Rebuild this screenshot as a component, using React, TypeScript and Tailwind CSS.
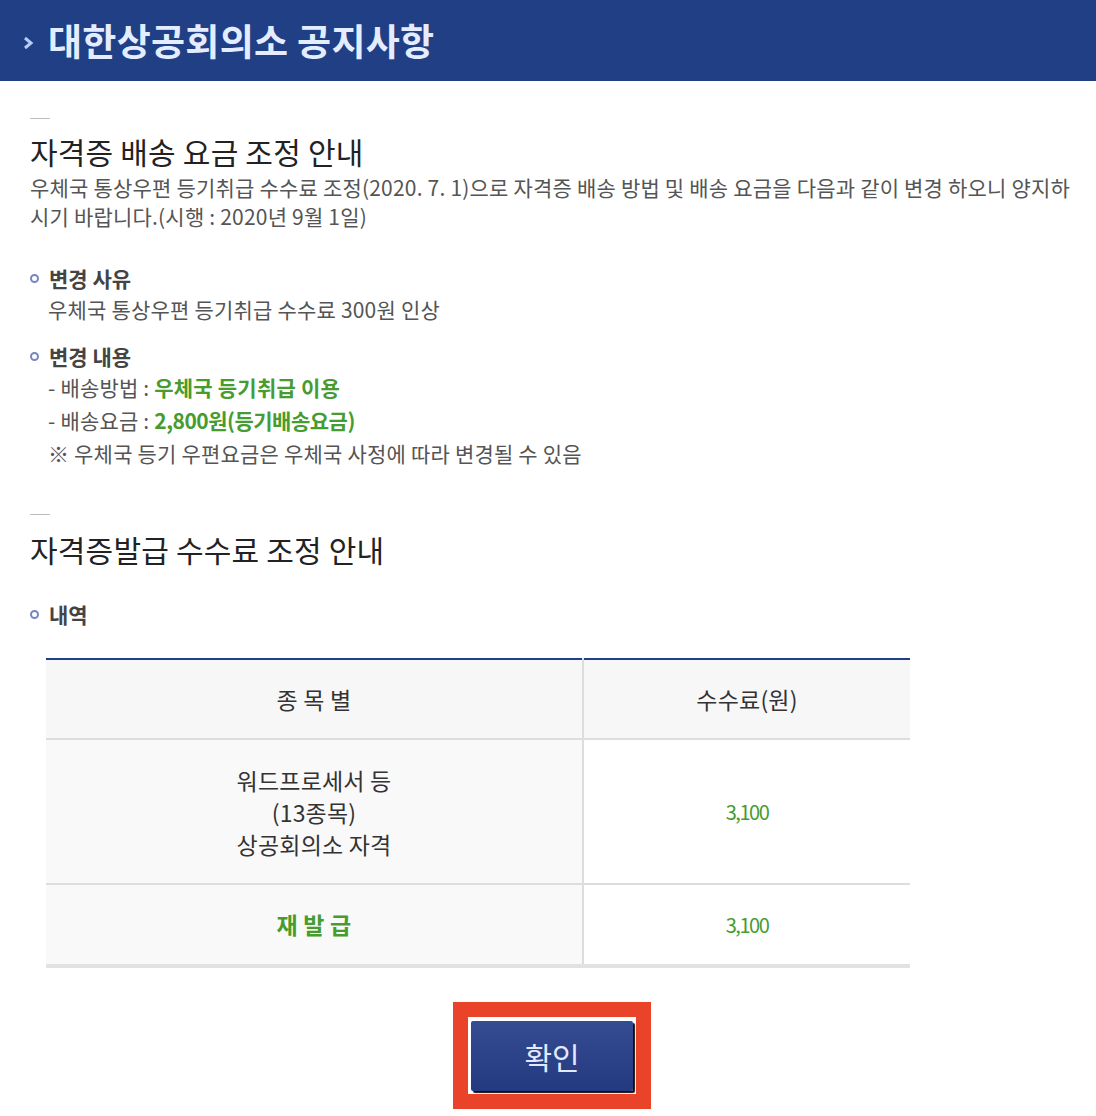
import React from 'react';

const font = { fontFamily: '"Noto Sans CJK KR", "Noto Sans", sans-serif' };

function Bullet({ children }: { children: React.ReactNode }) {
  return (
    <div className="flex items-center gap-[10px] text-[21px] font-bold text-[#444] leading-[30px]">
      <span className="w-[9px] h-[9px] rounded-full border-2 border-[#7486c4] shrink-0" />
      <span>{children}</span>
    </div>
  );
}

function Dash() {
  return <div className="w-[20px] h-px bg-[#bbb]" />;
}

export default function App() {
  return (
    <div style={font} className="w-[1096px] min-h-[1116px] bg-white">
      <header className="h-[81px] bg-[#203f84] flex items-center pl-[22px] gap-[14px]">
        <svg width="12" height="16" viewBox="0 0 12 16" className="mt-[4px]">
          <path d="M3 3 L9 8 L3 13" fill="none" stroke="#b7cdf5" strokeWidth="3" />
        </svg>
        <h1 className="text-[37px] font-bold text-[#e3edff] tracking-[0.3px]">대한상공회의소 공지사항</h1>
      </header>

      <main className="pl-[30px] pr-[20px]">
        <section className="pt-[37px]">
          <Dash />
          <h2 className="mt-[10px] text-[30px] leading-[44px] text-[#222] tracking-[0.2px]">자격증 배송 요금 조정 안내</h2>
          <p className="text-[21px] leading-[29px] text-[#555] tracking-[0.2px]">
            우체국 통상우편 등기취급 수수료 조정(2020. 7. 1)으로 자격증 배송 방법 및 배송 요금을 다음과 같이 변경 하오니 양지하시기 바랍니다.(시행 : 2020년 9월 1일)
          </p>

          <div className="mt-[32px]">
            <Bullet>변경 사유</Bullet>
            <div className="pl-[18px] text-[21px] leading-[32px] text-[#555] tracking-[0.2px]">우체국 통상우편 등기취급 수수료 300원 인상</div>
          </div>

          <div className="mt-[16px]">
            <Bullet>변경 내용</Bullet>
            <div className="pl-[18px] text-[21px] leading-[33px] text-[#555] tracking-[0.2px]">
              <div>
                - 배송방법 : <span className="font-bold text-[#469c2e]">우체국 등기취급 이용</span>
              </div>
              <div>
                - 배송요금 : <span className="font-bold text-[#469c2e] tracking-[-0.5px]">2,800원(등기배송요금)</span>
              </div>
              <div>※ 우체국 등기 우편요금은 우체국 사정에 따라 변경될 수 있음</div>
            </div>
          </div>
        </section>

        <section className="pt-[44px]">
          <Dash />
          <h2 className="mt-[12px] text-[30px] leading-[44px] text-[#222] tracking-[0.2px]">자격증발급 수수료 조정 안내</h2>
          <div className="mt-[28px]">
            <Bullet>내역</Bullet>
          </div>

          <table className="mt-[29px] ml-[16px] w-[864px] border-collapse border-t-2 border-[#203f84] text-[23px] text-[#333] tracking-[0.2px]">
            <thead>
              <tr className="h-[80px] bg-[#f7f7f7]">
                <th className="w-[537px] font-normal border-r-2 border-[#ddd]">종 목 별</th>
                <th className="font-normal">수수료(원)</th>
              </tr>
            </thead>
            <tbody>
              <tr className="h-[145px] border-t-2 border-[#ddd]">
                <td className="bg-[#f9f9f9] text-center leading-[32px] border-r-2 border-[#ddd]">
                  워드프로세서 등<br />(13종목)<br />상공회의소 자격
                </td>
                <td className="text-center text-[20px] text-[#469c2e] tracking-[-1.5px]">3,100</td>
              </tr>
              <tr className="h-[82px] border-t-2 border-[#ddd] border-b-4 border-b-[#e2e2e2]">
                <td className="bg-[#f9f9f9] text-center font-bold text-[#469c2e] border-r-2 border-[#ddd]">재 발 급</td>
                <td className="text-center text-[20px] text-[#469c2e] tracking-[-1.5px]">3,100</td>
              </tr>
            </tbody>
          </table>
        </section>

        <div className="flex justify-center pt-[34px] pr-[2px]">
          <div className="bg-[#e9432a] p-[15px]">
            <div className="bg-white p-[3px] pt-[4px]">
              <button className="w-[162px] h-[70px] bg-gradient-to-b from-[#364c92] to-[#243a80] text-[30px] text-[#e3eaff] shadow-[2px_2px_1px_#111] rounded-[2px]">
                확인
              </button>
            </div>
          </div>
        </div>
      </main>
    </div>
  );
}
